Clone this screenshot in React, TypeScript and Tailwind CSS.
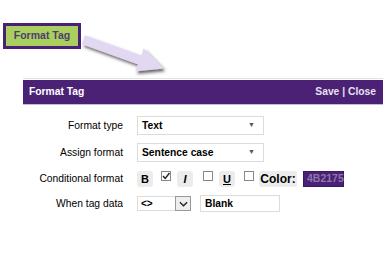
import React from 'react'

function FakeSelect({ value }: { value: string }) {
  return (
    <div className="flex items-center justify-between h-[19px] w-[127px] border border-[#dcdcdc] bg-white pl-[4px] pr-[8px]">
      <span className="text-[10.3px] font-bold text-black">{value}</span>
      <span className="text-[7px] text-[#555]">▼</span>
    </div>
  )
}

function Check({ checked }: { checked?: boolean }) {
  return (
    <span className="relative block w-[10px] h-[10px] border border-[#888] bg-white">
      {checked && (
        <svg viewBox="0 0 10 10" className="absolute -left-px -top-px w-[10px] h-[10px]">
          <path d="M2 5 L4.2 7.5 L8.5 2" fill="none" stroke="#222" strokeWidth="1.4" />
        </svg>
      )}
    </span>
  )
}

function StyleBtn({ children, className }: { children: React.ReactNode; className?: string }) {
  return (
    <span className={`flex items-center justify-center h-[16px] bg-[#ececec] rounded-[3px] font-bold text-black ${className ?? ''}`}>
      {children}
    </span>
  )
}

export default function App() {
  return (
    <div className="w-[390px] h-[260px] bg-white font-['Liberation_Sans',Arial,sans-serif] overflow-hidden">
      {/* Callout */}
      <div className="relative h-[78px]">
        <div className="absolute left-[3px] top-[23px] w-[78px] h-[26px] border-[3px] border-[#4B2175] bg-[#A9CF5E] flex items-center justify-center">
          <span className="text-[10.5px] font-bold text-[#4f3d6e]">Format Tag</span>
        </div>
        <svg className="absolute left-0 top-0" width="390" height="78" viewBox="0 0 390 78">
          <defs>
            <filter id="sh" x="-20%" y="-40%" width="140%" height="180%">
              <feDropShadow dx="2" dy="2.5" stdDeviation="1.6" floodColor="#333" floodOpacity="0.75" />
            </filter>
          </defs>
          <polygon
            points="85.3,36.2 141.8,56.5 143.8,49.5 162,68 136,70.5 139.1,64 82.7,43.8"
            fill="#e3d8f2"
            stroke="#e3d8f2"
            strokeWidth="1.5"
            strokeLinejoin="round"
            filter="url(#sh)"
          />
        </svg>
      </div>

      {/* Panel */}
      <div className="ml-[23px] w-[360px] border-t border-[#e2e2e2] pt-px">
        <div className="flex items-center justify-between h-[25px] bg-[#4B2175] pl-[6px] pr-[7px] border-b border-[#c8b8dc]">
          <span className="text-[10.3px] font-bold text-white">Format Tag</span>
          <span className="text-[10.3px] font-bold text-[#e8e0f0]">Save | Close</span>
        </div>

        <div className="grid grid-cols-[100px_1fr] gap-x-[14px] items-center pt-[11px] gap-y-[8px]">
          <span className="text-right text-[10.3px] text-black">Format type</span>
          <FakeSelect value="Text" />

          <span className="text-right text-[10.3px] text-black">Assign format</span>
          <FakeSelect value="Sentence case" />

          <span className="text-right text-[10.3px] text-black mt-[1px]">Conditional format</span>
          <div className="flex items-start h-[16px] mt-[1px]">
            <StyleBtn className="w-[16px] text-[11px]">B</StyleBtn>
            <span className="ml-[8px]"><Check checked /></span>
            <StyleBtn className="w-[16px] ml-[6px] italic text-[11px]">I</StyleBtn>
            <span className="ml-[10px]"><Check /></span>
            <StyleBtn className="w-[16px] ml-[6px] underline text-[11px]">U</StyleBtn>
            <span className="ml-[9px]"><Check /></span>
            <StyleBtn className="w-[38px] ml-[5px] text-[12px]">Color:</StyleBtn>
            <span className="ml-[6px] w-[41px] h-[16px] bg-[#4B2175] border border-[#3a1860] flex items-center pl-[3px] text-[10.5px] font-bold text-[#8c76aa]">
              4B2175
            </span>
          </div>

          <span className="text-right text-[10.3px] text-black">When tag data</span>
          <div className="flex items-center">
            <div className="flex items-center w-[54px] h-[15px] border border-[#dcdcdc] bg-white">
              <span className="flex-1 pl-[3px] text-[10px] font-bold text-black leading-none">&lt;&gt;</span>
              <span className="w-[16px] h-[15px] -mr-px border border-[#999] bg-[#eee] flex items-center justify-center">
                <svg viewBox="0 0 10 6" className="w-[9px] h-[6px]">
                  <path d="M1 1 L5 5 L9 1" fill="none" stroke="#222" strokeWidth="1.5" />
                </svg>
              </span>
            </div>
            <div className="ml-[9px] w-[80px] h-[17px] border border-[#dcdcdc] bg-white flex items-center pl-[4px]">
              <span className="text-[10.3px] font-bold text-black">Blank</span>
            </div>
          </div>
        </div>
      </div>
    </div>
  )
}
